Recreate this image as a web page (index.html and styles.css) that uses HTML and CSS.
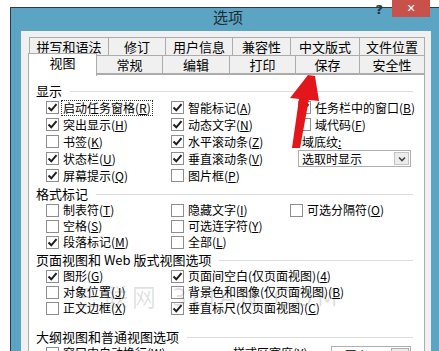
FILE: index.html
```html
<!DOCTYPE html>
<html lang="zh-CN">
<head>
    <meta charset="UTF-8">
    <meta name="viewport" content="width=device-width, initial-scale=1.0">
    <title>选项</title>
    <link rel="stylesheet" href="styles.css">
</head>
<body>
    <div class="window">
        <div class="titlebar">
            <span class="title">选项</span>
            <span class="help">?</span>
            <span class="close">✕</span>
        </div>

        <div class="dialog">
            <!-- Onglets sur deux rangées -->
            <div class="tab-row back">
                <div class="tab w79">拼写和语法</div>
                <div class="tab w57">修订</div>
                <div class="tab w67">用户信息</div>
                <div class="tab w58">兼容性</div>
                <div class="tab w69">中文版式</div>
                <div class="tab w65">文件位置</div>
            </div>
            <div class="tab-row front">
                <div class="tab active">视图</div>
                <div class="tab w66">常规</div>
                <div class="tab w67">编辑</div>
                <div class="tab w66">打印</div>
                <div class="tab w64">保存</div>
                <div class="tab w65">安全性</div>
            </div>

            <div class="panel">
                <div class="group-title">显示</div>
                <div class="options cols-show">
                    <label class="check on"><span class="box"></span><span class="text focus">启动任务窗格(<u>R</u>)</span></label>
                    <label class="check on"><span class="box"></span><span class="text">智能标记(<u>A</u>)</span></label>
                    <label class="check on"><span class="box"></span><span class="text">任务栏中的窗口(<u>B</u>)</span></label>

                    <label class="check on"><span class="box"></span><span class="text">突出显示(<u>H</u>)</span></label>
                    <label class="check on"><span class="box"></span><span class="text">动态文字(<u>N</u>)</span></label>
                    <label class="check"><span class="box"></span><span class="text">域代码(<u>F</u>)</span></label>

                    <label class="check"><span class="box"></span><span class="text">书签(<u>K</u>)</span></label>
                    <label class="check on"><span class="box"></span><span class="text">水平滚动条(<u>Z</u>)</span></label>
                    <span class="field-label">域底纹<u>:</u></span>

                    <label class="check on"><span class="box"></span><span class="text">状态栏(<u>U</u>)</span></label>
                    <label class="check on"><span class="box"></span><span class="text">垂直滚动条(<u>V</u>)</span></label>
                    <div class="select">
                        <span>选取时显示</span>
                        <span class="select-btn">
                            <svg width="8" height="6" viewBox="0 0 8 6"><path d="M1 1.5 L4 4.5 L7 1.5" fill="none" stroke="#444" stroke-width="1.6"/></svg>
                        </span>
                    </div>

                    <label class="check on"><span class="box"></span><span class="text">屏幕提示(<u>Q</u>)</span></label>
                    <label class="check"><span class="box"></span><span class="text">图片框(<u>P</u>)</span></label>
                </div>

                <div class="group-title">格式标记</div>
                <div class="options cols-marks">
                    <label class="check"><span class="box"></span><span class="text">制表符(<u>T</u>)</span></label>
                    <label class="check"><span class="box"></span><span class="text">隐藏文字(<u>I</u>)</span></label>
                    <label class="check"><span class="box"></span><span class="text">可选分隔符(<u>O</u>)</span></label>

                    <label class="check"><span class="box"></span><span class="text">空格(<u>S</u>)</span></label>
                    <label class="check"><span class="box"></span><span class="text">可选连字符(<u>Y</u>)</span></label>
                    <span></span>

                    <label class="check on"><span class="box"></span><span class="text">段落标记(<u>M</u>)</span></label>
                    <label class="check"><span class="box"></span><span class="text">全部(<u>L</u>)</span></label>
                </div>

                <div class="group-title">页面视图和 Web 版式视图选项</div>
                <div class="options cols-page">
                    <label class="check on"><span class="box"></span><span class="text">图形(<u>G</u>)</span></label>
                    <label class="check on"><span class="box"></span><span class="text">页面间空白(仅页面视图)(<u>4</u>)</span></label>

                    <label class="check"><span class="box"></span><span class="text">对象位置(<u>J</u>)</span></label>
                    <label class="check"><span class="box"></span><span class="text">背景色和图像(仅页面视图)(<u>B</u>)</span></label>

                    <label class="check"><span class="box"></span><span class="text">正文边框(<u>X</u>)</span></label>
                    <label class="check on"><span class="box"></span><span class="text">垂直标尺(仅页面视图)(<u>C</u>)</span></label>
                </div>

                <div class="group-title outline">大纲视图和普通视图选项</div>
                <div class="options cols-outline">
                    <label class="check"><span class="box"></span><span class="text">窗口内自动换行(<u>W</u>)</span></label>
                    <span class="field-label">样式区宽度(<u>Y</u>):</span>
                    <div class="spin">
                        <span>0 厘米</span>
                        <span class="spin-btn">
                            <svg width="7" height="4" viewBox="0 0 7 4"><path d="M0 4 L3.5 0 L7 4 Z" fill="#222"/></svg>
                        </span>
                    </div>
                </div>
            </div>
        </div>
    </div>

    <div class="watermark">三联网 3LIAN.COM</div>

    <!-- Flèche rouge ajoutée par-dessus la capture -->
    <svg class="arrow" width="439" height="351" viewBox="0 0 439 351">
        <path d="M292 148 L300 148 L309 99 L299 99 Z" fill="#e3161c"/>
        <path d="M308 75 L315 76 L319 101 L290 98 Z" fill="#e3161c"/>
    </svg>

    <script>
        // Dessiner la coche dans chaque case cochée
        document.querySelectorAll('.check.on .box').forEach(function(box) {
            box.innerHTML = '<svg width="11" height="11" viewBox="0 0 11 11"><path d="M1.5 5.5 L4.3 8.3 L9.5 2.2" fill="none" stroke="#1e1e1e" stroke-width="2"/></svg>';
        });
    </script>
</body>
</html>
```

FILE: styles.css
```css
body {
    margin: 0;
    background-color: #fff;
    font-family: 'Noto Sans CJK SC', 'DejaVu Sans', sans-serif;
    font-size: 12px;
    color: #000;
    overflow: hidden;
    width: 439px;
    height: 351px;
    position: relative;
}

.window {
    margin: 7px 0 0 10px;
    border-left: 1px solid #2f3b42;
    border-top: 1px solid #2f3b42;
    background-color: #5ba4c3;
    padding: 0 10px 0 10px;
    box-sizing: border-box;
    width: 431px;
}

.titlebar {
    display: flex;
    align-items: flex-start;
    height: 23px;
    margin-right: -10px;
}

.title {
    margin-left: 192px;
    font-size: 15px;
    line-height: 18px;
    color: #1d2a30;
}

.help {
    margin-left: auto;
    margin-top: -5px;
    font-family: 'DejaVu Sans', sans-serif;
    font-weight: bold;
    font-size: 13px;
    line-height: 14px;
    color: #26363e;
}

.close {
    width: 38px;
    height: 17px;
    margin-top: -8px;
    margin-left: 9px;
    margin-right: 11px;
    background-color: #c9514c;
    color: #fff;
    font-family: 'DejaVu Sans', sans-serif;
    font-weight: bold;
    font-size: 11px;
    line-height: 17px;
    text-align: center;
}

.dialog {
    background-color: #f0f0f0;
    padding: 6px 7px 0 7px;
    height: 320px;
}

.tab-row {
    display: flex;
    align-items: flex-end;
    height: 19px;
}

.tab-row.back {
    padding-left: 1px;
}

.tab-row.front {
    margin-top: -1px;
    padding-left: 1px;
    position: relative;
    z-index: 2;
}

.tab {
    box-sizing: border-box;
    height: 19px;
    margin-right: -1px;
    border: 1px solid #acacac;
    background-color: #f0f0f0;
    font-size: 13px;
    line-height: 17px;
    text-align: center;
}

.w57 { width: 58px; }
.w58 { width: 59px; }
.w64 { width: 65px; }
.w65 { width: 66px; }
.w66 { width: 67px; }
.w67 { width: 68px; }
.w69 { width: 70px; }
.w79 { width: 80px; }

.tab.active {
    width: 69px;
    height: 23px;
    margin-left: -1px;
    margin-bottom: -2px;
    border-bottom: none;
    background-color: #fff;
    line-height: 18px;
}

.panel {
    box-sizing: border-box;
    width: 397px;
    height: 300px;
    border: 1px solid #acacac;
    background-color: #fff;
    padding: 8px 11px 0 7px;
    position: relative;
    z-index: 1;
}

.group-title {
    display: flex;
    align-items: center;
    gap: 8px;
    font-size: 13px;
    line-height: 16px;
    margin-top: 2px;
}

.group-title:first-child {
    margin-top: 0;
}

.group-title::after {
    content: "";
    flex: 1;
    height: 1px;
    background-color: #dcdcdc;
}

.group-title.outline {
    margin-top: 13px;
}

.options {
    display: grid;
    padding-left: 10px;
    grid-auto-rows: 16px;
    align-items: center;
    margin-bottom: 1px;
}

.cols-show {
    grid-template-columns: 125px 127px 1fr;
    grid-auto-rows: 17px;
}

.cols-marks {
    grid-template-columns: 125px 119px 1fr;
}

.cols-page {
    grid-template-columns: 125px 1fr;
}

.cols-outline {
    grid-template-columns: 183px 102px 1fr;
}

.check {
    display: flex;
    align-items: center;
    gap: 3px;
    white-space: nowrap;
}

.box {
    box-sizing: border-box;
    width: 13px;
    height: 13px;
    border: 1px solid #8d8d8d;
    background-color: #fff;
    display: flex;
    align-items: center;
    justify-content: center;
}

.text {
    line-height: 14px;
    padding: 0 1px;
}

.text.focus {
    outline: 1px dotted #333;
}

.field-label {
    line-height: 14px;
    padding-left: 4px;
}

.select {
    box-sizing: border-box;
    width: 113px;
    height: 17px;
    border: 1px solid #abadb3;
    background-color: #fff;
    display: flex;
    align-items: center;
    justify-content: space-between;
    padding: 0 1px 0 3px;
}

.select-btn {
    box-sizing: border-box;
    width: 15px;
    height: 13px;
    border: 1px solid #c4c4c4;
    background-color: #ececec;
    display: flex;
    align-items: center;
    justify-content: center;
}

.spin {
    box-sizing: border-box;
    width: 80px;
    height: 20px;
    margin-top: 6px;
    border: 1px solid #abadb3;
    background-color: #fff;
    display: flex;
    justify-content: space-between;
    padding: 0 1px 0 3px;
}

.spin-btn {
    box-sizing: border-box;
    width: 18px;
    height: 9px;
    margin-top: 1px;
    border: 1px solid #acacac;
    background-color: #ececec;
    display: flex;
    align-items: center;
    justify-content: center;
}

.watermark {
    position: absolute;
    left: 76px;
    top: 278px;
    font-family: 'DejaVu Sans', 'Noto Sans CJK SC', sans-serif;
    font-size: 24px;
    letter-spacing: 4px;
    color: rgba(0, 0, 0, 0.12);
    z-index: 5;
    white-space: nowrap;
}

.arrow {
    position: absolute;
    left: 0;
    top: 0;
    z-index: 6;
    pointer-events: none;
}
```
